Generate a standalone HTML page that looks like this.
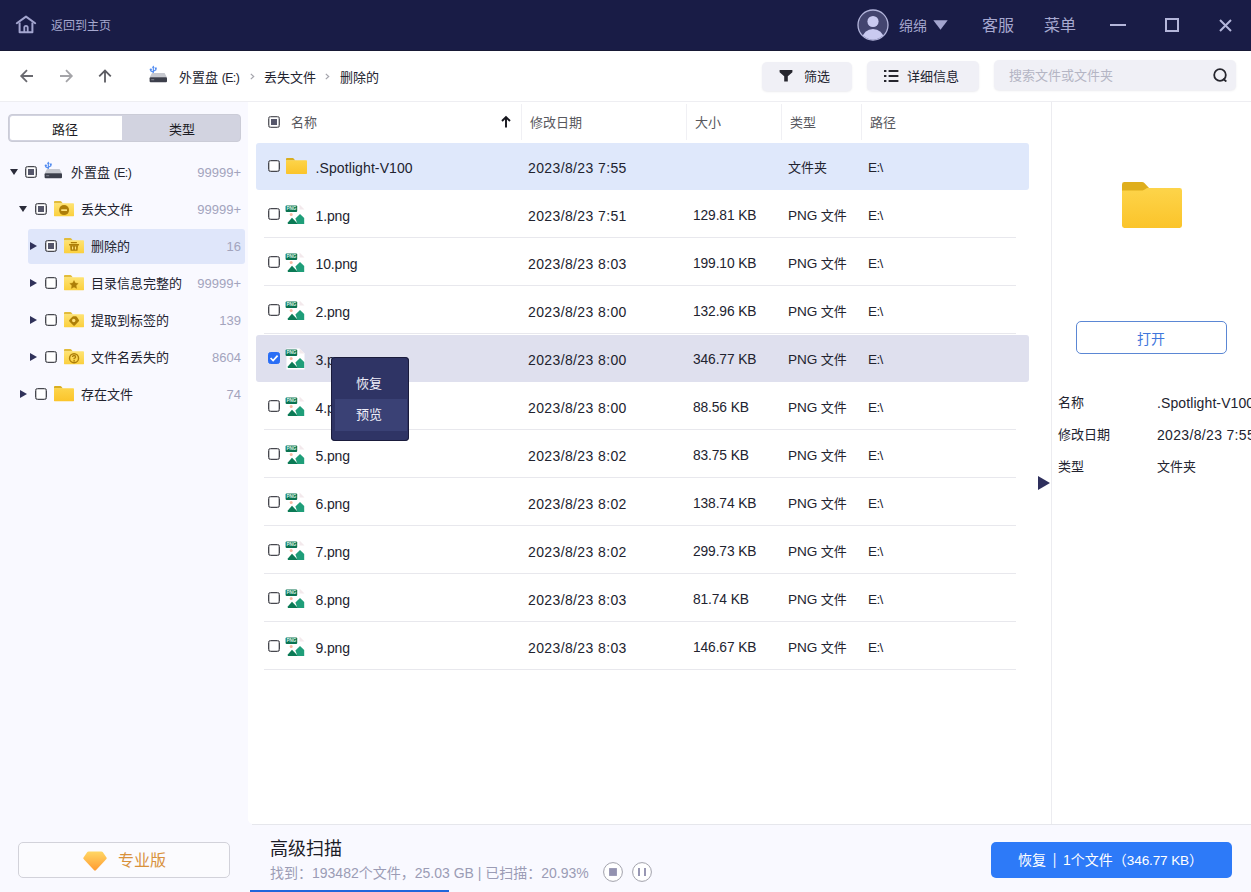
<!DOCTYPE html>
<html lang="zh-CN">
<head>
<meta charset="utf-8">
<title>数据恢复</title>
<style>
*{box-sizing:border-box;margin:0;padding:0}
html,body{width:1251px;height:892px;overflow:hidden;background:#fff}
body{position:relative;font-family:"Liberation Sans","Noto Sans CJK SC",sans-serif;font-size:13px;color:#22232f}
.abs{position:absolute}
.t{position:absolute;white-space:nowrap;line-height:20px;height:20px}
svg{position:absolute;display:block;overflow:visible}
.l{font-size:14px}
#titlebar{position:absolute;left:0;top:0;width:1251px;height:51px;background:#191c46;border-bottom:1px solid #171935}
#toolbar{position:absolute;left:0;top:51px;width:1251px;height:51px;background:#fff;border-bottom:1px solid #eeeef2}
#toolbar>*{margin-top:-1px}
.btn{position:absolute;background:#f0f0f6;border-radius:5px;box-shadow:0 1px 2px rgba(60,60,100,.10)}
#sidebar{position:absolute;left:0;top:102px;width:1251px;height:790px;background:#f9f9ff}
#tabs{position:absolute;left:8px;top:12px;width:233px;height:28px;background:#d2d3e0;border-radius:4px;border:1.5px solid #cbccd7}
#tabs .on{position:absolute;left:0.5px;top:0.5px;width:112.5px;height:24.5px;background:#fff;border-radius:2.5px 0 0 2.5px}
.cb{position:absolute;width:12px;height:12px;border:1px solid #47484f;border-radius:2.5px;background:#fff;box-shadow:inset 0 0 0 0.35px #47484f}
.cb.part::after{content:"";position:absolute;left:2px;top:2px;width:6px;height:6px;background:#55566a}
.cb.on{background:#2a6ef5;border-color:#2a6ef5;box-shadow:none}
.cnt{position:absolute;left:141px;width:100px;text-align:right;color:#a3a4bd;font-size:13px;line-height:20px;height:20px;white-space:nowrap}
.tri{position:absolute;width:0;height:0}
.tri.d{border-left:4.5px solid transparent;border-right:4.5px solid transparent;border-top:6.5px solid #2b2c3a}
.tri.r{border-top:4.5px solid transparent;border-bottom:4.5px solid transparent;border-left:7px solid #30325a}
#list{position:absolute;left:248px;top:102px;width:1003px;height:722px;background:#fff;border-radius:0 0 0 5px}
.hd{color:#58585e}
.sep{position:absolute;top:2px;width:1px;height:36px;background:#f0f0f4}
.row{position:absolute;left:8px;width:773px;height:48px}
.row .line{position:absolute;left:8px;right:13px;bottom:0;height:1px;background:#e8e8ed}
.row .bg{position:absolute;left:0;right:0;top:1px;bottom:0;border-radius:3px}
.row .t{top:15.5px}
.row .cb{left:12px;top:18px}
.row svg{left:29px;top:13px}
.c1{left:59.5px}.c2{left:272px}.c3{left:437px}.c4{left:532px}.c5{left:612px}
#right{position:absolute;left:1051px;top:102px;width:200px;height:722px;background:#fff;border-left:1px solid #ececf0;overflow:hidden}
#bottom{position:absolute;left:250px;top:825px;width:1001px;height:67px}
#bottom .bt{position:absolute;left:2px;top:-1px;right:0;height:1px;background:#e6e7ec}
#menu{position:absolute;left:331px;top:357px;width:78px;height:84px;background:#2f3465;border-radius:4px;box-shadow:0 0 0 1px rgba(22,24,52,.85) inset}
#menu .t{color:#eeeef8;left:-1px;width:78px;text-align:center}
</style>
</head>
<body>
<svg width="0" height="0" style="position:absolute"><defs>
<linearGradient id="fg" x1="0" y1="0" x2="0" y2="1"><stop offset="0" stop-color="#fdd44a"/><stop offset="1" stop-color="#fbc42a"/></linearGradient>
<linearGradient id="fgl" x1="0" y1="0" x2="0" y2="1"><stop offset="0" stop-color="#fee373"/><stop offset="1" stop-color="#fbcf3c"/></linearGradient>
<linearGradient id="dia" x1="0" y1="0" x2="0" y2="1"><stop offset="0" stop-color="#ffd765"/><stop offset="1" stop-color="#ff9a30"/></linearGradient>
<symbol id="folder" viewBox="0 0 20 15.6"><path d="M0 0.9 Q0 0 0.9 0 H6.4 Q6.9 0 7.3 0.4 L8.8 2.4 H0 Z" fill="#d9ae1f"/><path d="M0 2.2 H19.2 Q20 2.2 20 3 V14.8 Q20 15.6 19.2 15.6 H0.8 Q0 15.6 0 14.8 Z" fill="url(#fg)"/></symbol>
<symbol id="folderl" viewBox="0 0 20 15.6"><path d="M0 0.9 Q0 0 0.9 0 H6.4 Q6.9 0 7.3 0.4 L8.8 2.4 H0 Z" fill="#e2bc3a"/><path d="M0 2.2 H19.2 Q20 2.2 20 3 V14.8 Q20 15.6 19.2 15.6 H0.8 Q0 15.6 0 14.8 Z" fill="url(#fgl)"/></symbol>
<symbol id="png" viewBox="0 0 21 22"><path d="M1.5 0.5 H14.5 L19.5 5.5 V21.5 H1.5 Z" fill="#ffffff"/><path d="M14.5 0.5 V5.5 H19.5 Z" fill="#f3e9ec"/><rect x="0.6" y="1.5" width="11.6" height="6.4" rx="1" fill="#0a7350"/><text x="6.4" y="6.4" font-family="Liberation Sans,sans-serif" font-size="4.6" font-weight="700" fill="#d4f0e4" text-anchor="middle">PNG</text><circle cx="6.2" cy="10.6" r="1.5" fill="#f6b9a2"/><path d="M10.4 14.6 L15 9.9 L19.2 14 V20 H12.4 Z" fill="#1f9e79"/><path d="M2.8 20 V18.4 L7 13.8 L13 20 Z" fill="#0b7a55"/></symbol>
<symbol id="drive" viewBox="0 0 19 18"><path d="M4.3 8.4 V2 M4.3 7.2 L1.8 6 V4.8 M4.3 6.2 L6.8 5 V3.8" fill="none" stroke="#4f8af0" stroke-width="1.1"/><path d="M4.3 0.5 L2.9 2.7 H5.7 Z" fill="#4f8af0"/><circle cx="1.8" cy="4.6" r="1.15" fill="#4f8af0"/><rect x="5.9" y="2.5" width="1.8" height="1.8" fill="#4f8af0"/><path d="M3 7.9 H15.6 L18 12.6 H0.6 Z" fill="#c6c8cf"/><rect x="0.6" y="12.2" width="17.4" height="5" rx="1" fill="#3c3f4b"/><rect x="2.2" y="14.3" width="3" height="0.9" fill="#8a8d99"/></symbol>
</defs></svg>
<div id="titlebar">
<svg style="left:15px;top:15px" width="22" height="20" viewBox="0 0 22 20"><path d="M1.8 8.2 L11 1.6 L20.2 8.2" fill="none" stroke="#a3a5cf" stroke-width="2" stroke-linecap="round" stroke-linejoin="round"/><path d="M4.6 7.5 V17.2 H17.4 V7.5" fill="none" stroke="#a3a5cf" stroke-width="2" stroke-linejoin="round"/><path d="M9.3 17 V12.6 a1.7 1.7 0 0 1 3.4 0 V17" fill="none" stroke="#a3a5cf" stroke-width="1.8"/></svg>
<div class="t" style="left:51px;top:16px;font-size:12px;color:#a6a8cf">返回到主页</div>
<svg style="left:857px;top:9px" width="32" height="32" viewBox="0 0 32 32"><defs><clipPath id="avc"><circle cx="16" cy="16" r="14.5"/></clipPath></defs><circle cx="16" cy="16" r="15" fill="#43456f" stroke="#b4b6dc" stroke-width="1.3"/><g clip-path="url(#avc)"><circle cx="16" cy="12.5" r="5.6" fill="#c9caf0"/><ellipse cx="16" cy="29" rx="10.5" ry="9" fill="#c9caf0"/></g></svg>
<div class="t" style="left:899px;top:16px;font-size:14px;color:#a6a8cf">绵绵</div>
<svg style="left:933px;top:20px" width="15" height="10" viewBox="0 0 15 10"><path d="M0.3 0.3 H14.7 L7.5 9.8 Z" fill="#a3a5cf"/></svg>
<div class="t" style="left:982px;top:15.7px;font-size:16px;color:#a6a8cf">客服</div>
<div class="t" style="left:1044px;top:15.7px;font-size:16px;color:#a6a8cf">菜单</div>
<div class="abs" style="left:1110px;top:24px;width:16px;height:2px;background:#b4b6da"></div>
<div class="abs" style="left:1165px;top:18px;width:14px;height:14px;border:2px solid #b4b6da"></div>
<svg style="left:1219px;top:19px" width="13" height="13" viewBox="0 0 13 13"><path d="M1 1 L12 12 M12 1 L1 12" stroke="#b4b6da" stroke-width="2" fill="none"/></svg>
</div>
<div id="toolbar">
<svg style="left:20px;top:19px" width="14" height="14" viewBox="0 0 14 14"><path d="M13 7 H1.6 M7 1.2 L1.2 7 L7 12.8" fill="none" stroke="#6a6a70" stroke-width="1.8"/></svg>
<svg style="left:59px;top:19px" width="14" height="14" viewBox="0 0 14 14"><path d="M1 7 H12.4 M7 1.2 L12.8 7 L7 12.8" fill="none" stroke="#a4a4a8" stroke-width="1.8"/></svg>
<svg style="left:98px;top:19px" width="14" height="14" viewBox="0 0 14 14"><path d="M7 13.4 V2 M1.2 7.4 L7 1.6 L12.8 7.4" fill="none" stroke="#5c5c62" stroke-width="1.8"/></svg>
<svg style="left:149px;top:15px" width="19" height="18" viewBox="0 0 19 18"><use href="#drive"/></svg>
<div class="t" style="left:179px;top:17.6px">外置盘 <span style="font-size:12.3px;letter-spacing:-0.55px">(E:)</span></div>
<svg style="left:250px;top:23px" width="5" height="7" viewBox="0 0 5 7"><path d="M0.8 0.9 L3.7 3.5 L0.8 6.1" fill="none" stroke="#a4a4ac" stroke-width="1.2"/></svg>
<div class="t" style="left:264px;top:17.6px">丢失文件</div>
<svg style="left:325px;top:23px" width="5" height="7" viewBox="0 0 5 7"><path d="M0.8 0.9 L3.7 3.5 L0.8 6.1" fill="none" stroke="#a4a4ac" stroke-width="1.2"/></svg>
<div class="t" style="left:340px;top:17.6px">删除的</div>
<div class="btn" style="left:762px;top:12px;width:90px;height:29px"></div>
<svg style="left:779px;top:20px" width="14" height="12" viewBox="0 0 14 12"><path d="M0.6 0 H13.4 V2.2 L8.8 6.2 V11.6 H5.2 V6.2 L0.6 2.2 Z" fill="#26262e"/></svg>
<div class="t" style="left:804px;top:17px;font-size:13px">筛选</div>
<div class="btn" style="left:867px;top:11px;width:112px;height:30px"></div>
<svg style="left:884px;top:20px" width="15" height="12" viewBox="0 0 15 12"><path d="M0 1 h2.4 M4.6 1 h9.8 M0 6 h2.4 M4.6 6 h9.8 M0 11 h2.4 M4.6 11 h9.8" stroke="#26262e" stroke-width="2" fill="none"/></svg>
<div class="t" style="left:907px;top:17px;font-size:13px">详细信息</div>
<div class="btn" style="left:994px;top:10px;width:242px;height:30px"></div>
<div class="t" style="left:1009px;top:16px;font-size:13px;color:#b4b5c4">搜索文件或文件夹</div>
<svg style="left:1212px;top:17px" width="16" height="16" viewBox="0 0 16 16"><circle cx="8" cy="8" r="5.8" fill="none" stroke="#26262e" stroke-width="1.8"/><path d="M11.6 12.2 L13.8 14" stroke="#26262e" stroke-width="1.8" stroke-linecap="round"/></svg>
</div>
<div id="sidebar"><div id="tabs"><div class="on"></div></div><div class="t" style="left:52px;top:17.5px;color:#1c1c24">路径</div><div class="t" style="left:169px;top:17.5px;color:#1c1c24">类型</div><div class="tri d" style="left:9.5px;top:67px"></div><div class="cb part" style="left:25px;top:64px"></div><svg style="left:44px;top:calc(70px - 11px)" width="19" height="18" viewBox="0 0 19 18"><use href="#drive"/></svg><div class="t" style="left:71px;top:61.4px">外置盘 <span style="font-size:12.3px;letter-spacing:-0.55px">(E:)</span></div><div class="cnt" style="top:61.4px">99999+</div><div class="tri d" style="left:19px;top:104px"></div><div class="cb part" style="left:35px;top:101px"></div><svg style="left:54px;top:calc(107px - 8px)" width="20" height="15.6" viewBox="0 0 20 15.6"><use href="#folderl"/><circle cx="10.05" cy="9.1" r="5" fill="#ad7e08"/><rect x="7.2" y="8.3" width="5.8" height="1.7" rx="0.3" fill="#fde078"/></svg><div class="t" style="left:81px;top:98.4px">丢失文件</div><div class="cnt" style="top:98.4px">99999+</div><div class="abs" style="left:28px;top:127px;width:217px;height:35px;background:#dfe6fa;border-radius:3px"></div><div class="tri r" style="left:30px;top:139.5px"></div><div class="cb part" style="left:45px;top:138px"></div><svg style="left:64px;top:calc(144px - 8px)" width="20" height="15.6" viewBox="0 0 20 15.6"><use href="#folderl"/><rect x="6.7" y="4.1" width="6.3" height="1.1" rx="0.4" fill="#ad7e08"/><rect x="5" y="6" width="10.1" height="1.4" rx="0.4" fill="#ad7e08"/><path d="M6.1 7.2 H14 L13.6 12.2 Q13.5 12.8 12.9 12.8 H7.2 Q6.6 12.8 6.5 12.2 Z" fill="#ad7e08"/><path d="M8.6 8.4 V11.6 M11.5 8.4 V11.6" stroke="#fde078" stroke-width="1.2" fill="none"/></svg><div class="t" style="left:91px;top:135.4px">删除的</div><div class="cnt" style="top:135.4px">16</div><div class="tri r" style="left:30px;top:176.5px"></div><div class="cb" style="left:45px;top:175px"></div><svg style="left:64px;top:calc(181px - 8px)" width="20" height="15.6" viewBox="0 0 20 15.6"><use href="#folderl"/><path d="M10 5.5 L11.3 8.1 L14.2 8.5 L12.1 10.55 L12.6 13.4 L10 12.05 L7.4 13.4 L7.9 10.55 L5.8 8.5 L8.7 8.1 Z" fill="#ad7e08" stroke="#ad7e08" stroke-width="0.4" stroke-linejoin="round"/></svg><div class="t" style="left:91px;top:172.4px">目录信息完整的</div><div class="cnt" style="top:172.4px">99999+</div><div class="tri r" style="left:30px;top:213.5px"></div><div class="cb" style="left:45px;top:212px"></div><svg style="left:64px;top:calc(218px - 8px)" width="20" height="15.6" viewBox="0 0 20 15.6"><use href="#folderl"/><path d="M9.4 4.2 H11.8 Q12.4 4.2 12.8 4.7 L14.9 8 Q15.3 8.7 14.8 9.3 L10.8 13.4 Q10.1 14 9.4 13.4 L5.4 9.5 Q4.8 8.8 5.3 8.1 L8.4 4.7 Q8.8 4.2 9.4 4.2 Z" fill="#ad7e08"/><circle cx="9.7" cy="8.5" r="1.7" fill="#fde078"/></svg><div class="t" style="left:91px;top:209.4px">提取到标签的</div><div class="cnt" style="top:209.4px">139</div><div class="tri r" style="left:30px;top:250.5px"></div><div class="cb" style="left:45px;top:249px"></div><svg style="left:64px;top:calc(255px - 8px)" width="20" height="15.6" viewBox="0 0 20 15.6"><use href="#folderl"/><circle cx="10.05" cy="9.2" r="4.5" fill="none" stroke="#ad7e08" stroke-width="1.4"/><path d="M8.5 8 Q8.5 6.5 10.05 6.5 Q11.6 6.5 11.6 7.9 Q11.6 8.8 10.1 9.4 V10.3" stroke="#ad7e08" stroke-width="1.3" fill="none"/><circle cx="10.1" cy="11.8" r="0.85" fill="#ad7e08"/></svg><div class="t" style="left:91px;top:246.4px">文件名丢失的</div><div class="cnt" style="top:246.4px">8604</div><div class="tri r" style="left:20px;top:287.5px"></div><div class="cb" style="left:35px;top:286px"></div><svg style="left:54px;top:calc(292px - 8px)" width="20" height="15.6" viewBox="0 0 20 15.6"><use href="#folder"/></svg><div class="t" style="left:81px;top:283.4px">存在文件</div><div class="cnt" style="top:283.4px">74</div><div class="abs" style="left:18px;top:740px;width:212px;height:36px;border:1px solid #d2d2da;border-radius:5px;background:#fbfbfe"></div>
<svg style="left:83px;top:749px" width="24" height="20" viewBox="0 0 24 20"><path d="M5.6 0.4 H18.4 Q19.2 0.4 19.7 1 L23.5 6.5 Q24 7.3 23.4 8 L12.9 19.3 Q12 20.2 11.1 19.3 L0.6 8 Q0 7.3 0.5 6.5 L4.3 1 Q4.8 0.4 5.6 0.4 Z" fill="url(#dia)"/></svg>
<div class="t" style="left:118px;top:749px;font-size:16px;color:#d8913b">专业版</div>
</div>
<div id="list"><div class="cb part" style="left:20px;top:14px;border-color:#5c5c62"></div><div class="t hd" style="left:43px;top:11.3px">名称</div><svg style="left:253px;top:14px" width="10" height="12" viewBox="0 0 10 12"><path d="M5 11.6 V1.6 M1 5 L5 1 L9 5" fill="none" stroke="#15151c" stroke-width="1.9"/></svg><div class="sep" style="left:273px"></div><div class="sep" style="left:438px"></div><div class="sep" style="left:533px"></div><div class="sep" style="left:613px"></div><div class="t hd" style="left:282px;top:11.3px">修改日期</div><div class="t hd" style="left:447px;top:11.3px">大小</div><div class="t hd" style="left:542px;top:11.3px">类型</div><div class="t hd" style="left:622px;top:11.3px">路径</div><div class="row" style="top:40px"><div class="bg" style="background:#dfe8fb"></div><div class="cb"></div><svg style="left:30px;top:16px" width="21" height="16" viewBox="0 0 20 15.6" preserveAspectRatio="none"><use href="#folder"/></svg><div class="t l c1" style="letter-spacing:0.1px">.Spotlight-V100</div><div class="t l c2" style="letter-spacing:0.38px">2023/8/23 7:55</div><div class="t c4">文件夹</div><div class="t c5" style="font-size:13.5px;letter-spacing:-0.6px">E:\</div></div><div class="row" style="top:88px"><div class="line"></div><div class="cb"></div><svg style="left:29px;top:13.8px" width="21" height="22" viewBox="0 0 21 22"><use href="#png"/></svg><div class="t l c1" style="letter-spacing:-0.15px">1.png</div><div class="t l c2" style="letter-spacing:0.38px">2023/8/23 7:51</div><div class="t c3" style="font-size:13.8px;letter-spacing:-0.12px">129.81 KB</div><div class="t c4"><span style="font-size:13.6px;letter-spacing:-0.1px">PNG </span>文件</div><div class="t c5" style="font-size:13.5px;letter-spacing:-0.6px">E:\</div></div><div class="row" style="top:136px"><div class="line"></div><div class="cb"></div><svg style="left:29px;top:13.8px" width="21" height="22" viewBox="0 0 21 22"><use href="#png"/></svg><div class="t l c1" style="letter-spacing:-0.15px">10.png</div><div class="t l c2" style="letter-spacing:0.38px">2023/8/23 8:03</div><div class="t c3" style="font-size:13.8px;letter-spacing:-0.12px">199.10 KB</div><div class="t c4"><span style="font-size:13.6px;letter-spacing:-0.1px">PNG </span>文件</div><div class="t c5" style="font-size:13.5px;letter-spacing:-0.6px">E:\</div></div><div class="row" style="top:184px"><div class="line"></div><div class="cb"></div><svg style="left:29px;top:13.8px" width="21" height="22" viewBox="0 0 21 22"><use href="#png"/></svg><div class="t l c1" style="letter-spacing:-0.15px">2.png</div><div class="t l c2" style="letter-spacing:0.38px">2023/8/23 8:00</div><div class="t c3" style="font-size:13.8px;letter-spacing:-0.12px">132.96 KB</div><div class="t c4"><span style="font-size:13.6px;letter-spacing:-0.1px">PNG </span>文件</div><div class="t c5" style="font-size:13.5px;letter-spacing:-0.6px">E:\</div></div><div class="row" style="top:232px"><div class="bg" style="background:#dfe0ee"></div><div class="cb on"><svg style="left:0;top:0" width="10" height="10" viewBox="0 0 10 10"><path d="M1.6 5 L4.1 7.5 L8.6 2.6" fill="none" stroke="#fff" stroke-width="1.7"/></svg></div><svg style="left:29px;top:13.8px" width="21" height="22" viewBox="0 0 21 22"><use href="#png"/></svg><div class="t l c1" style="letter-spacing:-0.15px">3.png</div><div class="t l c2" style="letter-spacing:0.38px">2023/8/23 8:00</div><div class="t c3" style="font-size:13.8px;letter-spacing:-0.12px">346.77 KB</div><div class="t c4"><span style="font-size:13.6px;letter-spacing:-0.1px">PNG </span>文件</div><div class="t c5" style="font-size:13.5px;letter-spacing:-0.6px">E:\</div></div><div class="row" style="top:280px"><div class="line"></div><div class="cb"></div><svg style="left:29px;top:13.8px" width="21" height="22" viewBox="0 0 21 22"><use href="#png"/></svg><div class="t l c1" style="letter-spacing:-0.15px">4.png</div><div class="t l c2" style="letter-spacing:0.38px">2023/8/23 8:00</div><div class="t c3" style="font-size:13.8px;letter-spacing:-0.12px">88.56 KB</div><div class="t c4"><span style="font-size:13.6px;letter-spacing:-0.1px">PNG </span>文件</div><div class="t c5" style="font-size:13.5px;letter-spacing:-0.6px">E:\</div></div><div class="row" style="top:328px"><div class="line"></div><div class="cb"></div><svg style="left:29px;top:13.8px" width="21" height="22" viewBox="0 0 21 22"><use href="#png"/></svg><div class="t l c1" style="letter-spacing:-0.15px">5.png</div><div class="t l c2" style="letter-spacing:0.38px">2023/8/23 8:02</div><div class="t c3" style="font-size:13.8px;letter-spacing:-0.12px">83.75 KB</div><div class="t c4"><span style="font-size:13.6px;letter-spacing:-0.1px">PNG </span>文件</div><div class="t c5" style="font-size:13.5px;letter-spacing:-0.6px">E:\</div></div><div class="row" style="top:376px"><div class="line"></div><div class="cb"></div><svg style="left:29px;top:13.8px" width="21" height="22" viewBox="0 0 21 22"><use href="#png"/></svg><div class="t l c1" style="letter-spacing:-0.15px">6.png</div><div class="t l c2" style="letter-spacing:0.38px">2023/8/23 8:02</div><div class="t c3" style="font-size:13.8px;letter-spacing:-0.12px">138.74 KB</div><div class="t c4"><span style="font-size:13.6px;letter-spacing:-0.1px">PNG </span>文件</div><div class="t c5" style="font-size:13.5px;letter-spacing:-0.6px">E:\</div></div><div class="row" style="top:424px"><div class="line"></div><div class="cb"></div><svg style="left:29px;top:13.8px" width="21" height="22" viewBox="0 0 21 22"><use href="#png"/></svg><div class="t l c1" style="letter-spacing:-0.15px">7.png</div><div class="t l c2" style="letter-spacing:0.38px">2023/8/23 8:02</div><div class="t c3" style="font-size:13.8px;letter-spacing:-0.12px">299.73 KB</div><div class="t c4"><span style="font-size:13.6px;letter-spacing:-0.1px">PNG </span>文件</div><div class="t c5" style="font-size:13.5px;letter-spacing:-0.6px">E:\</div></div><div class="row" style="top:472px"><div class="line"></div><div class="cb"></div><svg style="left:29px;top:13.8px" width="21" height="22" viewBox="0 0 21 22"><use href="#png"/></svg><div class="t l c1" style="letter-spacing:-0.15px">8.png</div><div class="t l c2" style="letter-spacing:0.38px">2023/8/23 8:03</div><div class="t c3" style="font-size:13.8px;letter-spacing:-0.12px">81.74 KB</div><div class="t c4"><span style="font-size:13.6px;letter-spacing:-0.1px">PNG </span>文件</div><div class="t c5" style="font-size:13.5px;letter-spacing:-0.6px">E:\</div></div><div class="row" style="top:520px"><div class="line"></div><div class="cb"></div><svg style="left:29px;top:13.8px" width="21" height="22" viewBox="0 0 21 22"><use href="#png"/></svg><div class="t l c1" style="letter-spacing:-0.15px">9.png</div><div class="t l c2" style="letter-spacing:0.38px">2023/8/23 8:03</div><div class="t c3" style="font-size:13.8px;letter-spacing:-0.12px">146.67 KB</div><div class="t c4"><span style="font-size:13.6px;letter-spacing:-0.1px">PNG </span>文件</div><div class="t c5" style="font-size:13.5px;letter-spacing:-0.6px">E:\</div></div></div>
<div id="right">
<svg style="left:70px;top:80px" width="60" height="46" viewBox="0 0 60 46"><path d="M0 2.4 Q0 0 2.4 0 H20 Q21.4 0 22.4 1 L26.6 5.6 V10 H0 Z" fill="#dfae1c"/><path d="M0 9 Q0 8.6 0.6 8.4 L20.6 8.4 Q21.8 8.4 22.8 7.6 L25 6 H57.6 Q60 6 60 8.4 V43.6 Q60 46 57.6 46 H2.4 Q0 46 0 43.6 Z" fill="url(#fg)"/></svg>
<div class="abs" style="left:24px;top:219px;width:151px;height:33px;border:1px solid #5b87d4;border-radius:5px;background:#fff"></div>
<div class="t" style="left:23px;top:226.5px;width:152px;text-align:center;font-size:14px;color:#3f76dc">打开</div>
<div class="t" style="left:6px;top:290.6px">名称</div><div class="t l" style="left:105px;top:290.6px;letter-spacing:0.1px">.Spotlight-V100</div>
<div class="t" style="left:6px;top:322.6px">修改日期</div><div class="t l" style="left:105px;top:322.6px;letter-spacing:0.33px">2023/8/23 7:55</div>
<div class="t" style="left:6px;top:354.6px">类型</div><div class="t" style="left:105px;top:354.6px">文件夹</div>
</div>
<div class="tri" style="left:1038px;top:476px;border-top:7px solid transparent;border-bottom:7px solid transparent;border-left:12px solid #2e2f5c"></div>
<div id="bottom"><div class="bt"></div>
<div class="t" style="left:20px;top:11px;font-size:18px;line-height:26px;height:26px;color:#1c1c26">高级扫描</div>
<div class="t" style="left:20px;top:37.6px;font-size:14px;color:#9b9cb5">找到：193482个文件，25.03 GB | 已扫描：20.93%</div>
<svg style="left:353px;top:37px" width="20" height="20" viewBox="0 0 20 20"><circle cx="10" cy="10" r="9.4" fill="#fff" stroke="#a2a2ac" stroke-width="1"/><rect x="6.1" y="6.1" width="7.8" height="7.8" fill="#9392b0"/></svg>
<svg style="left:382px;top:37px" width="20" height="20" viewBox="0 0 20 20"><circle cx="10" cy="10" r="9.4" fill="#fff" stroke="#a2a2ac" stroke-width="1"/><path d="M7 6 V14 M13 6 V14" stroke="#9392b0" stroke-width="1.9"/></svg>
<div class="abs" style="left:741px;top:17px;width:241px;height:36px;background:#2d7af8;border-radius:5px"></div>
<div class="t" style="left:741px;top:25px;width:241px;text-align:center;font-size:14px;color:#fff;padding-right:2px">恢复<span style="display:inline-block;width:17px;text-align:center;font-size:12px;line-height:18px;position:relative;top:-1px;transform:scaleY(1.35)">|</span>1个文件（<span style="font-size:13.6px;letter-spacing:-0.15px">346.77 KB</span>）</div>
<div class="abs" style="left:0;top:64.5px;width:199px;height:3px;background:#1f66dc"></div>
</div>
<div id="menu"><div class="abs" style="left:4px;top:42px;width:72px;height:32px;background:#3a4175"></div><div class="t" style="top:16.5px">恢复</div><div class="t" style="top:48.2px">预览</div></div>
</body>
</html>
